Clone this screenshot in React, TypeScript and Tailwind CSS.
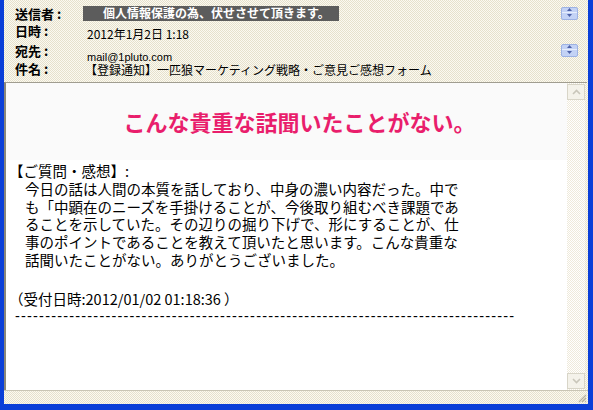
const dither = 'bg-[conic-gradient(#fbf9f1_25%,#e6e1cc_0_50%,#fbf9f1_0_75%,#e6e1cc_0)] bg-[length:2px_2px]'
const paleDither = 'bg-[conic-gradient(#ffffff_25%,#efeadb_0_50%,#ffffff_0_75%,#efeadb_0)] bg-[length:2px_2px]'

const Spin = () => (
  <div className="flex h-[13px] w-[17px] flex-col overflow-hidden rounded-[2px] border border-[#9db2e4] bg-[#c3d2f5]">
    <div className="flex h-[6px] items-center justify-center border-b border-[#e6edfc]">
      <svg width="5" height="3" viewBox="0 0 5 3"><path d="M0 3 L2.5 0 L5 3Z" fill="#4d61a8" /></svg>
    </div>
    <div className="flex h-[6px] items-center justify-center">
      <svg width="5" height="3" viewBox="0 0 5 3"><path d="M0 0 L2.5 3 L5 0Z" fill="#4d61a8" /></svg>
    </div>
  </div>
)

const Row = ({ label, h, children, spin }: { label: string; h: string; children?: React.ReactNode; spin?: boolean }) => (
  <div className={`flex items-center leading-none ${h}`}>
    <div className="w-[72px] shrink-0 text-[13px] font-bold leading-none text-black">{label}</div>
    <div className="flex-1 leading-none">{children}</div>
    {spin && <div className="mr-[10px]"><Spin /></div>}
  </div>
)

const lines = [
  '今日の話は人間の本質を話しており、中身の濃い内容だった。中で',
  'も「中顕在のニーズを手掛けることが、今後取り組むべき課題であ',
  'ることを示していた。その辺りの掘り下げで、形にすることが、仕',
  '事のポイントであることを教えて頂いたと思います。こんな貴重な',
  '話聞いたことがない。ありがとうございました。',
]

export default function App() {
  return (
    <div
      className="flex h-[410px] w-[593px] flex-col bg-[#0b3fd8] pb-[6px] pl-[4px] pr-[5px]"
      style={{ fontFamily: '"Noto Sans CJK JP", "Liberation Sans", sans-serif' }}
    >
      <div className={`flex flex-1 flex-col ${dither}`}>
        {/* header */}
        <div className="flex h-[82px] flex-col pl-[11px] pt-[4px]">
          <Row label="送信者 :" h="h-[18px]" spin>
            <div className="ml-[-4px] flex h-[15px] w-[256px] items-center bg-[#5c5c5c] pl-[20px] text-[12px] font-bold leading-none text-white">
              個人情報保護の為、伏せさせて頂きます。
            </div>
          </Row>
          <Row label="日時 :" h="h-[17px]">
            <span className="relative top-[1px] text-[12px] text-black">2012年1月2日 1:18</span>
          </Row>
          <Row label="宛先 :" h="h-[22px]" spin>
            <span className="relative top-[4px] text-[11px] text-black" style={{ fontFamily: '"Liberation Sans", sans-serif' }}>
              mail@1pluto.com
            </span>
          </Row>
          <Row label="件名 :" h="h-[14px]">
            <span className="ml-[-2px] text-[12px] text-black">【登録通知】一匹狼マーケティング戦略・ご意見ご感想フォーム</span>
          </Row>
        </div>

        {/* body */}
        <div className="mr-[1px] flex flex-1 border-l-2 border-t border-l-[#8a877a] border-t-[#a09d90]">
          <div className="flex-1 bg-white">
            <div className="flex h-[77px] items-center justify-center bg-[#fafafa] pl-[26px]">
              <h1 className="text-[22px] font-bold text-[#e91e6c]">こんな貴重な話聞いたことがない。</h1>
            </div>
            <div className="pl-[3px] pt-[2px] text-[14.5px] leading-[17.8px] text-black">
              <div>【ご質問・感想】:</div>
              {lines.map((l) => (
                <div key={l} className="pl-[16px]">{l}</div>
              ))}
              <div className="h-[21px]" />
              <div>（受付日時:2012/01/02 01:18:36 ）</div>
              <div className="pl-[6px] tracking-[1.2px]" style={{ fontFamily: '"Liberation Sans", sans-serif' }}>
                {'-'.repeat(83)}
              </div>
            </div>
          </div>
          {/* scrollbar */}
          <div className={`flex w-[18px] flex-col justify-between py-[1px] ${paleDither}`}>
            <div className="flex h-[16px] items-center justify-center border border-[#d8d5c8] bg-[#f4f2ea]">
              <svg width="9" height="6" viewBox="0 0 9 6"><path d="M1 5 L4.5 1.5 L8 5" stroke="#c9c6ba" strokeWidth="1.6" fill="none" /></svg>
            </div>
            <div className="flex h-[16px] items-center justify-center border border-[#d8d5c8] bg-[#f4f2ea]">
              <svg width="9" height="6" viewBox="0 0 9 6"><path d="M1 1 L4.5 4.5 L8 1" stroke="#c9c6ba" strokeWidth="1.6" fill="none" /></svg>
            </div>
          </div>
          <div className="w-[2px]" />
        </div>

        {/* status bar */}
        <div className="relative h-[14px] border-t border-[#c9c5b4]">
          <svg className="absolute bottom-[1px] right-[1px]" width="10" height="10" viewBox="0 0 10 10">
            <path d="M9 2 L2 9 M9 5 L5 9 M9 8 L8 9" stroke="#b5b09c" strokeWidth="1.2" />
          </svg>
        </div>
      </div>
    </div>
  )
}
